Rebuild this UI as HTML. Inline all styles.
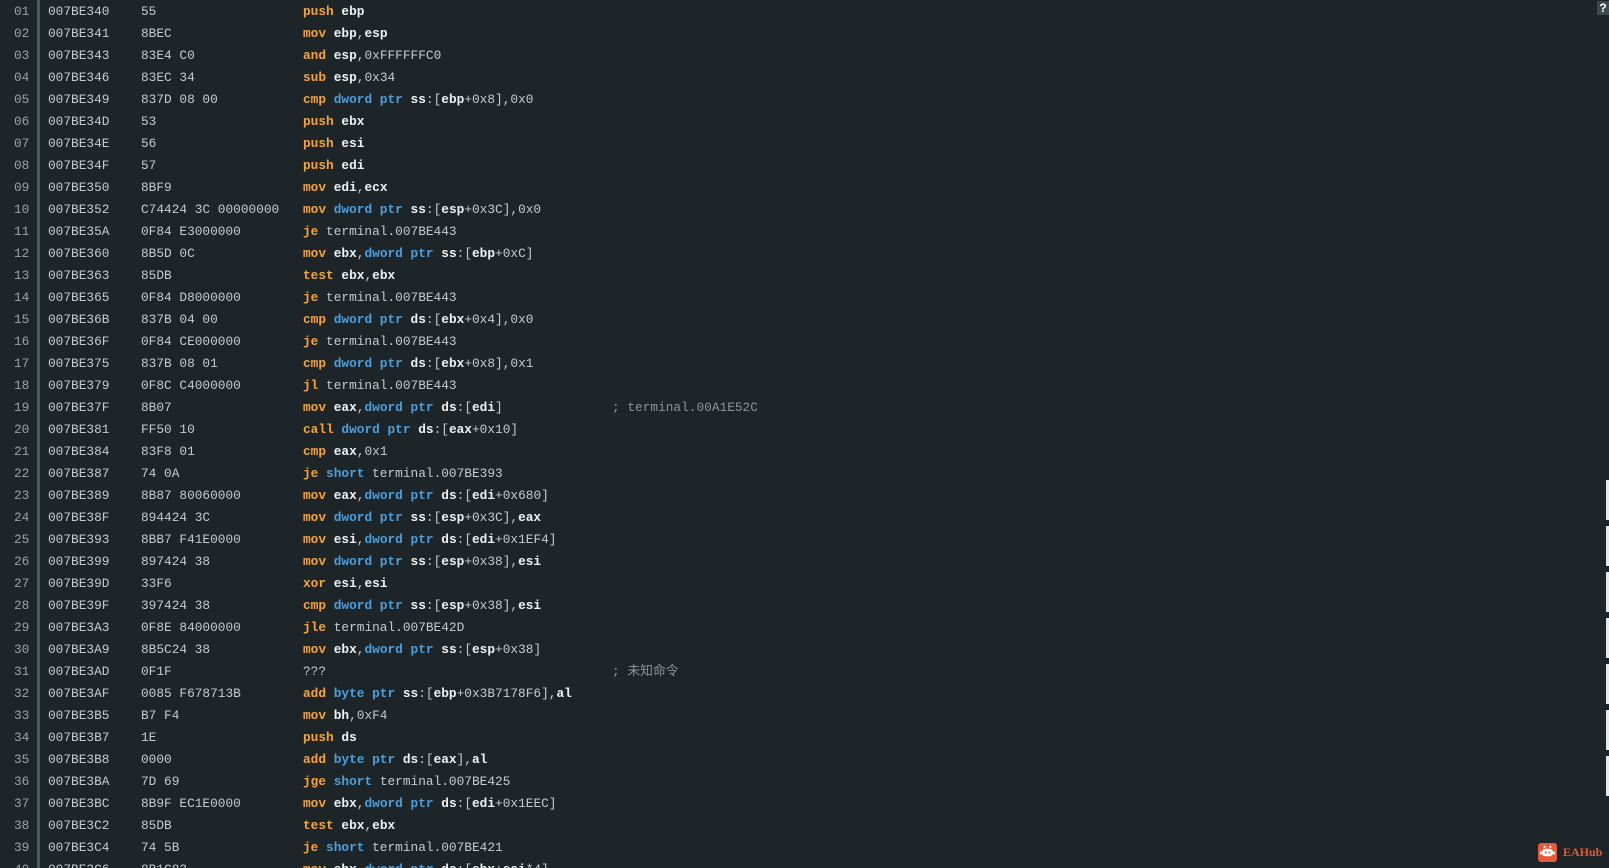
<!DOCTYPE html><html><head><meta charset="utf-8"><style>
html,body{margin:0;padding:0;width:1609px;height:868px;overflow:hidden;background:#1e2529;}
body{font-family:"Liberation Mono","Noto Sans CJK SC",monospace;font-size:12.8px;color:#c6cbcd;position:relative}
.bar{position:absolute;left:37px;top:0;width:3px;height:868px;background:#4b5a60}
.row{position:absolute;left:0;height:22px;line-height:22px;white-space:pre;width:1600px;margin-top:1px}
.n{position:absolute;left:14px;color:#9aa3a7}
.a{position:absolute;left:48px}
.b{position:absolute;left:141px}
.c{position:absolute;left:303px}
.m{position:absolute;left:612px;color:#8c9498}
.k{color:#f5a43a;font-weight:bold}
.r{color:#eef2f4;font-weight:bold}
.t{color:#4d9fdc;font-weight:bold}
.rs{position:absolute;left:1606px;width:3px;background:#e8e8e8}
.q{position:absolute;left:1597px;top:1px;width:12px;height:14px;background:#3c4a50;color:#fff;font:bold 12px "Liberation Sans",sans-serif;text-align:center;line-height:14px}
.logo{position:absolute;left:1538px;top:843px;width:19px;height:19px;background:#e9583a;border-radius:3px}
.lt{position:absolute;left:1563px;top:845px;color:#e05a3a;font:bold 12px "Liberation Serif",serif}
</style></head><body>
<div class="bar"></div>
<div class="q">?</div>
<div class="rs" style="top:480px;height:40px"></div>
<div class="rs" style="top:526px;height:40px"></div>
<div class="rs" style="top:572px;height:40px"></div>
<div class="rs" style="top:618px;height:40px"></div>
<div class="rs" style="top:664px;height:40px"></div>
<div class="rs" style="top:710px;height:40px"></div>
<div class="rs" style="top:756px;height:40px"></div>
<div class="logo"><svg width="19" height="19" viewBox="0 0 20 20"><circle cx="7" cy="4" r="1.2" fill="#fff"/><circle cx="13" cy="4" r="1.2" fill="#fff"/><rect x="4" y="6" width="12" height="8" rx="4" fill="#fff"/><rect x="7" y="9" width="2" height="2" fill="#e9583a"/><rect x="11" y="9" width="2" height="2" fill="#e9583a"/><rect x="2" y="9" width="2" height="3" fill="#fff"/><rect x="16" y="9" width="2" height="3" fill="#fff"/></svg></div>
<div class="lt">EAHub</div>

<div class="row" style="top:0px"><span class="n">01</span><span class="a">007BE340</span><span class="b">55</span><span class="c"><span class="k">push</span> <span class="r">ebp</span></span></div>
<div class="row" style="top:22px"><span class="n">02</span><span class="a">007BE341</span><span class="b">8BEC</span><span class="c"><span class="k">mov</span> <span class="r">ebp</span>,<span class="r">esp</span></span></div>
<div class="row" style="top:44px"><span class="n">03</span><span class="a">007BE343</span><span class="b">83E4 C0</span><span class="c"><span class="k">and</span> <span class="r">esp</span>,0xFFFFFFC0</span></div>
<div class="row" style="top:66px"><span class="n">04</span><span class="a">007BE346</span><span class="b">83EC 34</span><span class="c"><span class="k">sub</span> <span class="r">esp</span>,0x34</span></div>
<div class="row" style="top:88px"><span class="n">05</span><span class="a">007BE349</span><span class="b">837D 08 00</span><span class="c"><span class="k">cmp</span> <span class="t">dword ptr</span> <span class="r">ss</span>:[<span class="r">ebp</span>+0x8],0x0</span></div>
<div class="row" style="top:110px"><span class="n">06</span><span class="a">007BE34D</span><span class="b">53</span><span class="c"><span class="k">push</span> <span class="r">ebx</span></span></div>
<div class="row" style="top:132px"><span class="n">07</span><span class="a">007BE34E</span><span class="b">56</span><span class="c"><span class="k">push</span> <span class="r">esi</span></span></div>
<div class="row" style="top:154px"><span class="n">08</span><span class="a">007BE34F</span><span class="b">57</span><span class="c"><span class="k">push</span> <span class="r">edi</span></span></div>
<div class="row" style="top:176px"><span class="n">09</span><span class="a">007BE350</span><span class="b">8BF9</span><span class="c"><span class="k">mov</span> <span class="r">edi</span>,<span class="r">ecx</span></span></div>
<div class="row" style="top:198px"><span class="n">10</span><span class="a">007BE352</span><span class="b">C74424 3C 00000000</span><span class="c"><span class="k">mov</span> <span class="t">dword ptr</span> <span class="r">ss</span>:[<span class="r">esp</span>+0x3C],0x0</span></div>
<div class="row" style="top:220px"><span class="n">11</span><span class="a">007BE35A</span><span class="b">0F84 E3000000</span><span class="c"><span class="k">je</span> terminal.007BE443</span></div>
<div class="row" style="top:242px"><span class="n">12</span><span class="a">007BE360</span><span class="b">8B5D 0C</span><span class="c"><span class="k">mov</span> <span class="r">ebx</span>,<span class="t">dword ptr</span> <span class="r">ss</span>:[<span class="r">ebp</span>+0xC]</span></div>
<div class="row" style="top:264px"><span class="n">13</span><span class="a">007BE363</span><span class="b">85DB</span><span class="c"><span class="k">test</span> <span class="r">ebx</span>,<span class="r">ebx</span></span></div>
<div class="row" style="top:286px"><span class="n">14</span><span class="a">007BE365</span><span class="b">0F84 D8000000</span><span class="c"><span class="k">je</span> terminal.007BE443</span></div>
<div class="row" style="top:308px"><span class="n">15</span><span class="a">007BE36B</span><span class="b">837B 04 00</span><span class="c"><span class="k">cmp</span> <span class="t">dword ptr</span> <span class="r">ds</span>:[<span class="r">ebx</span>+0x4],0x0</span></div>
<div class="row" style="top:330px"><span class="n">16</span><span class="a">007BE36F</span><span class="b">0F84 CE000000</span><span class="c"><span class="k">je</span> terminal.007BE443</span></div>
<div class="row" style="top:352px"><span class="n">17</span><span class="a">007BE375</span><span class="b">837B 08 01</span><span class="c"><span class="k">cmp</span> <span class="t">dword ptr</span> <span class="r">ds</span>:[<span class="r">ebx</span>+0x8],0x1</span></div>
<div class="row" style="top:374px"><span class="n">18</span><span class="a">007BE379</span><span class="b">0F8C C4000000</span><span class="c"><span class="k">jl</span> terminal.007BE443</span></div>
<div class="row" style="top:396px"><span class="n">19</span><span class="a">007BE37F</span><span class="b">8B07</span><span class="c"><span class="k">mov</span> <span class="r">eax</span>,<span class="t">dword ptr</span> <span class="r">ds</span>:[<span class="r">edi</span>]</span><span class="m">; terminal.00A1E52C</span></div>
<div class="row" style="top:418px"><span class="n">20</span><span class="a">007BE381</span><span class="b">FF50 10</span><span class="c"><span class="k">call</span> <span class="t">dword ptr</span> <span class="r">ds</span>:[<span class="r">eax</span>+0x10]</span></div>
<div class="row" style="top:440px"><span class="n">21</span><span class="a">007BE384</span><span class="b">83F8 01</span><span class="c"><span class="k">cmp</span> <span class="r">eax</span>,0x1</span></div>
<div class="row" style="top:462px"><span class="n">22</span><span class="a">007BE387</span><span class="b">74 0A</span><span class="c"><span class="k">je</span> <span class="t">short</span> terminal.007BE393</span></div>
<div class="row" style="top:484px"><span class="n">23</span><span class="a">007BE389</span><span class="b">8B87 80060000</span><span class="c"><span class="k">mov</span> <span class="r">eax</span>,<span class="t">dword ptr</span> <span class="r">ds</span>:[<span class="r">edi</span>+0x680]</span></div>
<div class="row" style="top:506px"><span class="n">24</span><span class="a">007BE38F</span><span class="b">894424 3C</span><span class="c"><span class="k">mov</span> <span class="t">dword ptr</span> <span class="r">ss</span>:[<span class="r">esp</span>+0x3C],<span class="r">eax</span></span></div>
<div class="row" style="top:528px"><span class="n">25</span><span class="a">007BE393</span><span class="b">8BB7 F41E0000</span><span class="c"><span class="k">mov</span> <span class="r">esi</span>,<span class="t">dword ptr</span> <span class="r">ds</span>:[<span class="r">edi</span>+0x1EF4]</span></div>
<div class="row" style="top:550px"><span class="n">26</span><span class="a">007BE399</span><span class="b">897424 38</span><span class="c"><span class="k">mov</span> <span class="t">dword ptr</span> <span class="r">ss</span>:[<span class="r">esp</span>+0x38],<span class="r">esi</span></span></div>
<div class="row" style="top:572px"><span class="n">27</span><span class="a">007BE39D</span><span class="b">33F6</span><span class="c"><span class="k">xor</span> <span class="r">esi</span>,<span class="r">esi</span></span></div>
<div class="row" style="top:594px"><span class="n">28</span><span class="a">007BE39F</span><span class="b">397424 38</span><span class="c"><span class="k">cmp</span> <span class="t">dword ptr</span> <span class="r">ss</span>:[<span class="r">esp</span>+0x38],<span class="r">esi</span></span></div>
<div class="row" style="top:616px"><span class="n">29</span><span class="a">007BE3A3</span><span class="b">0F8E 84000000</span><span class="c"><span class="k">jle</span> terminal.007BE42D</span></div>
<div class="row" style="top:638px"><span class="n">30</span><span class="a">007BE3A9</span><span class="b">8B5C24 38</span><span class="c"><span class="k">mov</span> <span class="r">ebx</span>,<span class="t">dword ptr</span> <span class="r">ss</span>:[<span class="r">esp</span>+0x38]</span></div>
<div class="row" style="top:660px"><span class="n">31</span><span class="a">007BE3AD</span><span class="b">0F1F</span><span class="c">???</span><span class="m">; 未知命令</span></div>
<div class="row" style="top:682px"><span class="n">32</span><span class="a">007BE3AF</span><span class="b">0085 F678713B</span><span class="c"><span class="k">add</span> <span class="t">byte ptr</span> <span class="r">ss</span>:[<span class="r">ebp</span>+0x3B7178F6],<span class="r">al</span></span></div>
<div class="row" style="top:704px"><span class="n">33</span><span class="a">007BE3B5</span><span class="b">B7 F4</span><span class="c"><span class="k">mov</span> <span class="r">bh</span>,0xF4</span></div>
<div class="row" style="top:726px"><span class="n">34</span><span class="a">007BE3B7</span><span class="b">1E</span><span class="c"><span class="k">push</span> <span class="r">ds</span></span></div>
<div class="row" style="top:748px"><span class="n">35</span><span class="a">007BE3B8</span><span class="b">0000</span><span class="c"><span class="k">add</span> <span class="t">byte ptr</span> <span class="r">ds</span>:[<span class="r">eax</span>],<span class="r">al</span></span></div>
<div class="row" style="top:770px"><span class="n">36</span><span class="a">007BE3BA</span><span class="b">7D 69</span><span class="c"><span class="k">jge</span> <span class="t">short</span> terminal.007BE425</span></div>
<div class="row" style="top:792px"><span class="n">37</span><span class="a">007BE3BC</span><span class="b">8B9F EC1E0000</span><span class="c"><span class="k">mov</span> <span class="r">ebx</span>,<span class="t">dword ptr</span> <span class="r">ds</span>:[<span class="r">edi</span>+0x1EEC]</span></div>
<div class="row" style="top:814px"><span class="n">38</span><span class="a">007BE3C2</span><span class="b">85DB</span><span class="c"><span class="k">test</span> <span class="r">ebx</span>,<span class="r">ebx</span></span></div>
<div class="row" style="top:836px"><span class="n">39</span><span class="a">007BE3C4</span><span class="b">74 5B</span><span class="c"><span class="k">je</span> <span class="t">short</span> terminal.007BE421</span></div>
<div class="row" style="top:858px"><span class="n">40</span><span class="a">007BE3C6</span><span class="b">8B1C83</span><span class="c"><span class="k">mov</span> <span class="r">ebx</span>,<span class="t">dword ptr</span> <span class="r">ds</span>:[<span class="r">ebx</span>+<span class="r">esi</span>*4]</span></div>
</body></html>
